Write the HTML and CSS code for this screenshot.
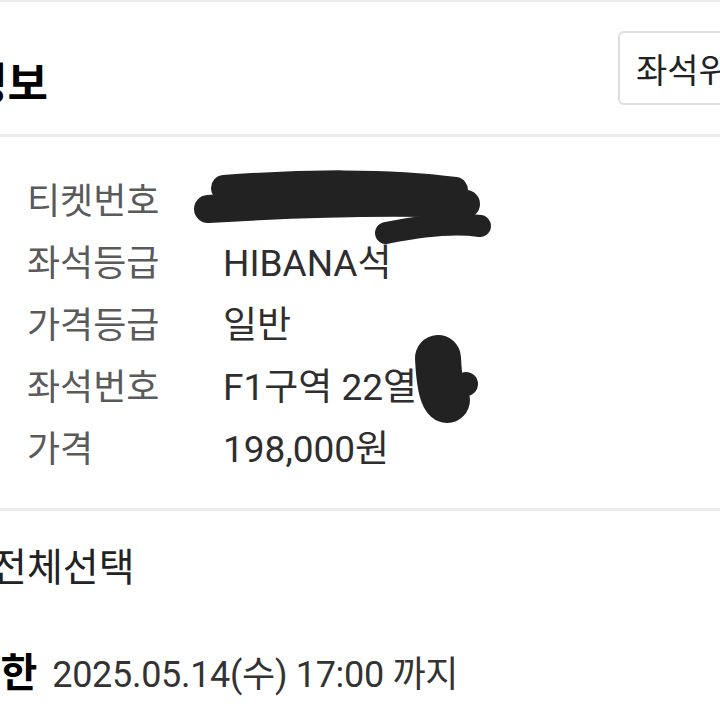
FILE: index.html
```html
<!DOCTYPE html>
<html lang="ko">
<head>
    <meta charset="UTF-8">
    <meta name="viewport" content="width=device-width, initial-scale=1.0">
    <title>예매정보</title>
    <link rel="stylesheet" href="styles.css">
</head>
<body>
    <div class="page">
        <div class="top-rule"></div>

        <header class="ticket-header">
            <h1 class="ticket-title">예매정보</h1>
            <button class="seat-button" type="button">좌석위치</button>
        </header>

        <div class="divider"></div>

        <!-- Ticket details -->
        <dl class="ticket-info">
            <dt>티켓번호</dt><dd>&nbsp;</dd>
            <dt>좌석등급</dt><dd>HIBANA석</dd>
            <dt>가격등급</dt><dd>일반</dd>
            <dt>좌석번호</dt><dd>F1구역 22열</dd>
            <dt>가격</dt><dd>198,000원</dd>
        </dl>

        <div class="divider"></div>

        <section class="cancel-section">
            <label class="select-all">전체선택</label>
            <div class="deadline">
                <span class="deadline-label">취소기한</span>
                <span class="deadline-date">2025.05.14(수) 17:00 까지</span>
            </div>
        </section>

        <!-- Hand-drawn redaction marks -->
        <svg class="redact" width="720" height="720" viewBox="0 0 720 720">
            <g fill="none" stroke="#222" stroke-linecap="round" stroke-linejoin="round">
                <path d="M224 188 C300 182, 390 181, 455 190" stroke-width="26"/>
                <path d="M208 209 C290 204, 380 201, 466 204" stroke-width="28"/>
                <path d="M386 233 C420 226, 452 222, 480 226" stroke-width="22"/>
                <path d="M438 358 C439 380, 442 398, 447 400" stroke-width="46"/>
            </g>
            <circle cx="466" cy="384" r="12" fill="#222"/>
        </svg>
    </div>
</body>
</html>
```

FILE: styles.css
```css
:root {
    --rule-color: #ebebeb;
    --label-color: #5a5a5a;
    --value-color: #2e2e2e;
}
body {
    margin: 0;
    background: #fff;
    font-family: 'Roboto', 'Noto Sans CJK KR', sans-serif;
    color: var(--value-color);
}
.page {
    position: relative;
    width: 720px;
    height: 720px;
    overflow: hidden;
}
.top-rule { height: 2px; background: var(--rule-color); }
.divider { height: 3px; background: var(--rule-color); }

/* Header */
.ticket-header {
    display: flex;
    align-items: center;
    height: 132px;
}
.ticket-title {
    margin: 26px 0 0 -114px;
    font-size: 44px;
    font-weight: 700;
    color: #000;
    white-space: nowrap;
}
.seat-button {
    margin-left: auto;
    margin-right: -59px;
    flex-shrink: 0;
    height: 74px;
    padding: 0 16px;
    border: 2px solid #dedede;
    border-radius: 6px;
    background: #fff;
    font-family: inherit;
    font-size: 34px;
    color: #222;
    white-space: nowrap;
}

/* Detail rows */
.ticket-info {
    display: grid;
    grid-template-columns: 196px 1fr;
    grid-auto-rows: 62px;
    align-items: center;
    margin: 0;
    padding: 30px 0 31px 27px;
}
.ticket-info dt {
    font-size: 36px;
    color: var(--label-color);
}
.ticket-info dd {
    margin: 0;
    font-size: 37px;
    color: var(--value-color);
}

/* Cancel section */
.cancel-section { padding-top: 32px; }
.select-all {
    display: block;
    margin-left: -9px;
    font-size: 39px;
    color: #222;
    line-height: 50px;
}
.deadline {
    display: flex;
    align-items: baseline;
    gap: 15px;
    margin: 48px 0 0 -110px;
}
.deadline-label {
    font-size: 40px;
    font-weight: 700;
    color: #000;
}
.deadline-date {
    font-size: 36px;
    letter-spacing: -0.3px;
    color: #333;
}

.redact {
    position: absolute;
    top: 0;
    left: 0;
    pointer-events: none;
}
```
